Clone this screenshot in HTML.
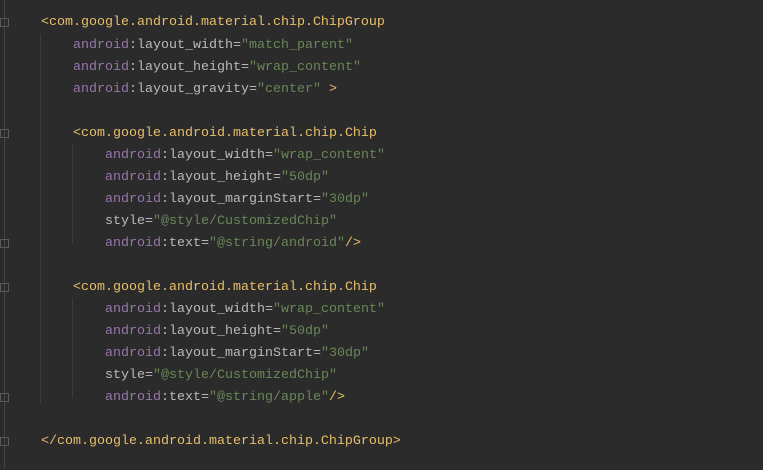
<!DOCTYPE html>
<html><head><style>
body{margin:0;width:763px;height:468px;background:#2b2b2b;overflow:hidden;position:relative;font-family:"Liberation Mono",monospace;font-size:13.33px}
.w{position:absolute;left:0;top:2px;width:763px;height:468px}
.l{position:absolute;left:0;height:22px;line-height:22px;white-space:pre;color:#bababa}
.t{color:#e8bf6a}.n{color:#9876aa}.s{color:#6a8759}
.g{position:absolute;width:1px;background:#3b3b3b}
.f{position:absolute;left:0;width:9px;height:9px;border:1px solid #5a5a5a;box-sizing:border-box}
</style></head><body>
<div class="g" style="left:4px;top:0;height:468px;background:#444"></div>
<div class="w">
<div class="g" style="left:40px;top:32px;height:370px"></div>
<div class="g" style="left:72px;top:142px;height:100px"></div>
<div class="g" style="left:72px;top:296px;height:100px"></div>
<div class="f" style="top:16px"></div>
<div class="f" style="top:127px"></div>
<div class="f" style="top:237px"></div>
<div class="f" style="top:281px"></div>
<div class="f" style="top:391px"></div>
<div class="f" style="top:435px"></div>
<div class="l" style="top:10px;left:41px"><span class="t">&lt;com.google.android.material.chip.ChipGroup</span></div>
<div class="l" style="top:33px;left:73px"><span class="n">android</span>:layout_width=<span class="s">"match_parent"</span></div>
<div class="l" style="top:55px;left:73px"><span class="n">android</span>:layout_height=<span class="s">"wrap_content"</span></div>
<div class="l" style="top:77px;left:73px"><span class="n">android</span>:layout_gravity=<span class="s">"center"</span> <span class="t">&gt;</span></div>
<div class="l" style="top:121px;left:73px"><span class="t">&lt;com.google.android.material.chip.Chip</span></div>
<div class="l" style="top:143px;left:105px"><span class="n">android</span>:layout_width=<span class="s">"wrap_content"</span></div>
<div class="l" style="top:165px;left:105px"><span class="n">android</span>:layout_height=<span class="s">"50dp"</span></div>
<div class="l" style="top:187px;left:105px"><span class="n">android</span>:layout_marginStart=<span class="s">"30dp"</span></div>
<div class="l" style="top:209px;left:105px">style=<span class="s">"@style/CustomizedChip"</span></div>
<div class="l" style="top:231px;left:105px"><span class="n">android</span>:text=<span class="s">"@string/android"</span><span class="t">/&gt;</span></div>
<div class="l" style="top:275px;left:73px"><span class="t">&lt;com.google.android.material.chip.Chip</span></div>
<div class="l" style="top:297px;left:105px"><span class="n">android</span>:layout_width=<span class="s">"wrap_content"</span></div>
<div class="l" style="top:319px;left:105px"><span class="n">android</span>:layout_height=<span class="s">"50dp"</span></div>
<div class="l" style="top:341px;left:105px"><span class="n">android</span>:layout_marginStart=<span class="s">"30dp"</span></div>
<div class="l" style="top:363px;left:105px">style=<span class="s">"@style/CustomizedChip"</span></div>
<div class="l" style="top:385px;left:105px"><span class="n">android</span>:text=<span class="s">"@string/apple"</span><span class="t">/&gt;</span></div>
<div class="l" style="top:429px;left:41px"><span class="t">&lt;/com.google.android.material.chip.ChipGroup&gt;</span></div>
</div>
</body></html>
